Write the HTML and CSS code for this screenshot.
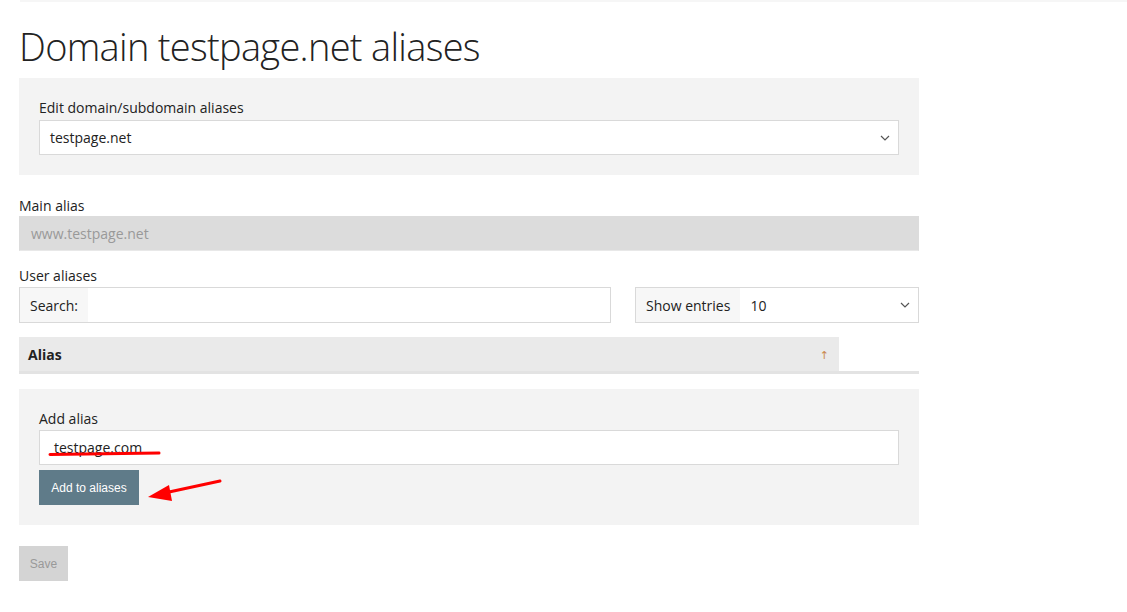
FILE: index.html
```html
<!DOCTYPE html>
<html lang="en">
<head>
<meta charset="utf-8">
<title>Domain testpage.net aliases</title>
<link rel="stylesheet" href="styles.css">
</head>
<body>
<div class="topbar"></div>
<main class="page">
  <h1 class="title">Domain testpage.net aliases</h1>

  <section class="panel">
    <label class="label">Edit domain/subdomain aliases</label>
    <div class="select">
      <span class="select-value">testpage.net</span>
      <svg class="chev" width="10" height="6" viewBox="0 0 10 6"><path d="M1 1l4 4 4-4" fill="none" stroke="#555" stroke-width="1.2"/></svg>
    </div>
  </section>

  <div class="field main-alias">
    <label class="label">Main alias</label>
    <div class="input disabled">www.testpage.net</div>
  </div>

  <div class="field user-aliases">
    <label class="label">User aliases</label>
    <div class="controls">
      <div class="group search">
        <span class="addon">Search:</span>
        <span class="group-input"></span>
      </div>
      <div class="group entries">
        <span class="addon">Show entries</span>
        <span class="group-input entries-value">10
          <svg class="chev" width="10" height="6" viewBox="0 0 10 6"><path d="M1 1l4 4 4-4" fill="none" stroke="#555" stroke-width="1.2"/></svg>
        </span>
      </div>
    </div>
  </div>

  <div class="table-head">
    <div class="th">Alias <span class="sort">↑</span></div>
  </div>

  <section class="panel add-panel">
    <label class="label">Add alias</label>
    <div class="input add-input">testpage.com</div>
    <button class="btn primary">Add to aliases</button>
    <svg class="marks" width="900" height="140" viewBox="0 0 900 140">
      <path d="M31 65.5 L140 64" stroke="#f00" stroke-width="3" fill="none" stroke-linecap="round"/>
      <path d="M201 92 L150 103" stroke="#f00" stroke-width="3" fill="none" stroke-linecap="round"/>
      <path d="M129 108 L150 96 L153 112 Z" fill="#f00"/>
    </svg>
  </section>

  <button class="btn save">Save</button>
</main>
</body>
</html>
```

FILE: styles.css
```css
* { box-sizing: border-box; }
html, body { margin: 0; padding: 0; background: #fff; }
body {
  font-family: "Open Sans", "Noto Sans", "DejaVu Sans", sans-serif;
  font-size: 14px;
  color: #222;
}
.topbar {
  height: 2px;
  margin-left: 20px;
  background: #f6f6f6;
}
.page {
  width: 900px;
  margin-left: 19px;
  padding-bottom: 20px;
}
.title {
  margin: 21px 0 0 0;
  height: 55px;
  font-size: 38px;
  line-height: 46px;
  font-weight: 300;
  color: #222;
  letter-spacing: -0.7px;
}
.panel {
  background: #f3f3f3;
  padding: 20px;
  position: relative;
}
.label {
  display: block;
  line-height: 20px;
  height: 20px;
  margin-bottom: 2px;
  color: #222;
}
.select, .input {
  height: 35px;
  border: 1px solid #d9d9d9;
  background: #fff;
  display: flex;
  align-items: center;
  padding: 0 10px;
  color: #222;
}
.select { justify-content: space-between; padding-right: 8px; }
.chev { display: block; }
.main-alias { margin-top: 21px; }
.main-alias .label { margin-bottom: 0; }
.input.disabled {
  background: #dcdcdc;
  border-color: #dcdcdc;
  border-bottom-color: #e8e8e8;
  color: #999;
  padding-left: 11px;
}
.user-aliases { margin-top: 15px; }
.user-aliases .label { margin-bottom: 1px; }
.controls {
  display: flex;
  justify-content: space-between;
}
.group {
  display: flex;
  height: 36px;
  border: 1px solid #d9d9d9;
  background: #fff;
}
.search { width: 592px; }
.entries { width: 284px; }
.addon {
  background: #f7f7f7;
  display: flex;
  align-items: center;
  padding: 0 10px;
}
.group-input {
  flex: 1;
  display: flex;
  align-items: center;
  justify-content: space-between;
  padding: 0 8px 0 10px;
}
.table-head {
  margin-top: 14px;
  border-bottom: 3px solid #e3e3e3;
}
.th {
  width: 820px;
  height: 34px;
  background: #eaeaea;
  display: flex;
  align-items: center;
  justify-content: space-between;
  padding: 0 10px 0 9px;
  font-weight: 700;
}
.sort {
  font-weight: 400;
  font-size: 11px;
  color: #c9884e;
}
.add-panel { margin-top: 15px; }
.add-panel .label { margin-bottom: 1px; }
.add-input { padding-left: 14px; }
.btn {
  display: block;
  font-family: "Liberation Sans", Arial, sans-serif;
  font-size: 12px;
  height: 35px;
  border: 0;
  padding: 0 12px;
  margin: 0;
}
.primary {
  margin-top: 5px;
  background: #5f7b89;
  color: #fff;
  width: 100px;
}
.save {
  margin-top: 21px;
  background: #d4d4d4;
  color: #999;
  width: 49px;
  padding: 0;
}
.marks {
  position: absolute;
  left: 0;
  top: 0;
  pointer-events: none;
}
```
